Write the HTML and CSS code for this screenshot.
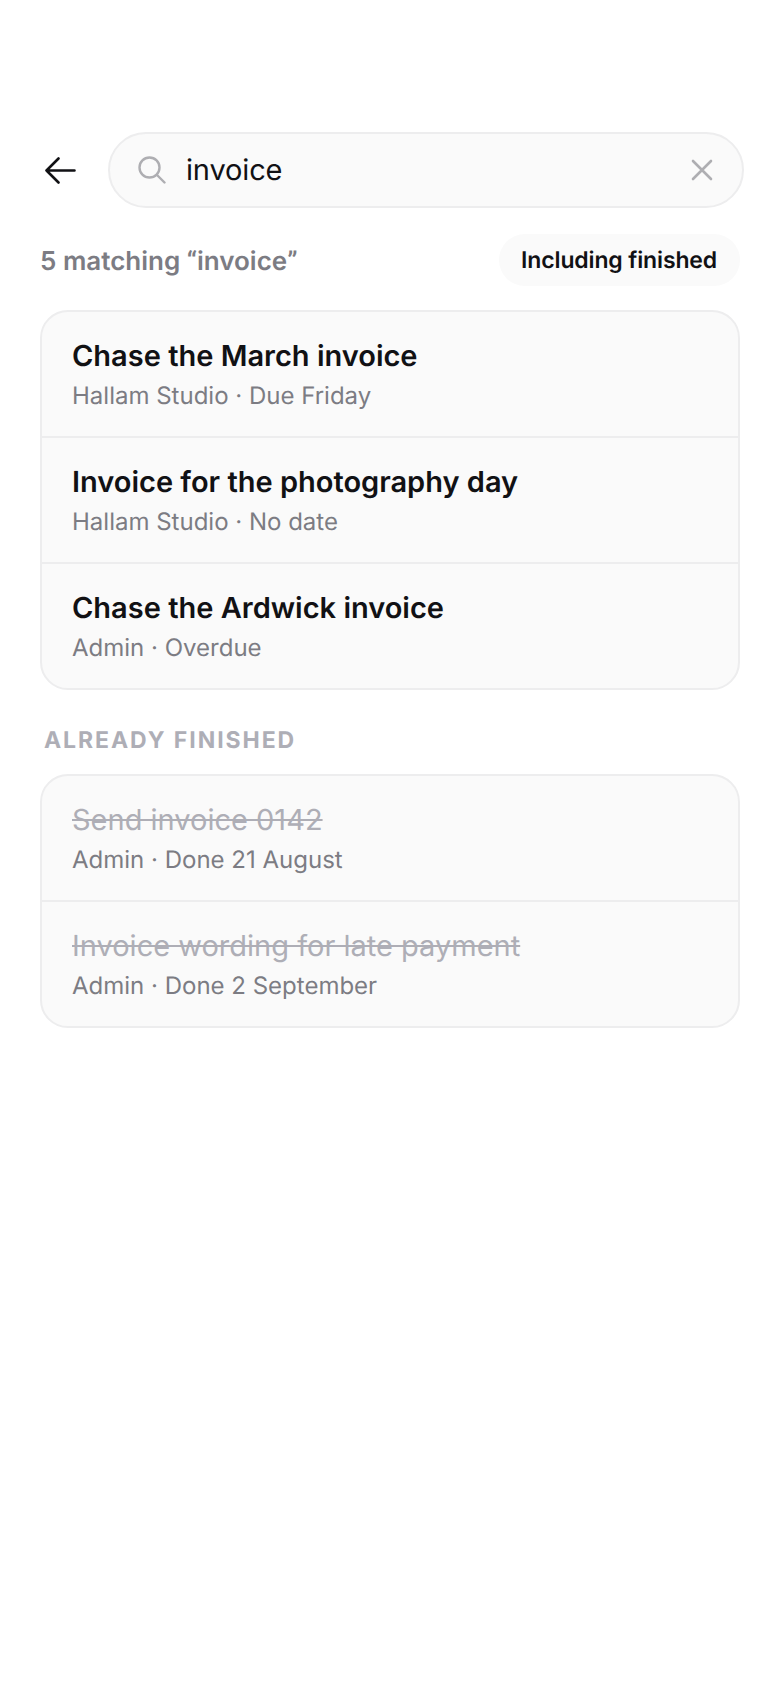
FILE: index.html
```html
<!DOCTYPE html>
<html lang="en">
<head>
<meta charset="utf-8">
<title>Search</title>
<link rel="stylesheet" href="styles.css">
</head>
<body>
<main class="screen">
  <header class="search-row">
    <button class="back" aria-label="Back">
      <svg width="31" height="27" viewBox="0 0 31 27" fill="none" stroke="#111114" stroke-width="2.6" stroke-linecap="round" stroke-linejoin="round"><path d="M29.5 13.5H1.5M13.5 1.5 1.5 13.5l12 12"/></svg>
    </button>
    <div class="search-box">
      <svg class="search-icon" width="28" height="28" viewBox="0 0 28 28" fill="none" stroke="#aeaeb2" stroke-width="2.4" stroke-linecap="round"><circle cx="11.5" cy="11.5" r="10"/><path d="m19 19 7.5 7.5"/></svg>
      <span class="query">invoice</span>
      <svg class="clear-icon" width="22" height="22" viewBox="0 0 22 22" fill="none" stroke="#aeaeb2" stroke-width="2.6" stroke-linecap="round"><path d="M2 2l18 18M20 2 2 20"/></svg>
    </div>
  </header>

  <div class="summary">
    <span class="count">5 matching <span class="quote">“</span>invoice<span class="quote">”</span></span>
    <span class="chip">Including finished</span>
  </div>

  <section class="card">
    <div class="row"><div class="title">Chase the March invoice</div><div class="sub">Hallam Studio · Due Friday</div></div>
    <div class="row"><div class="title">Invoice for the photography day</div><div class="sub">Hallam Studio · No date</div></div>
    <div class="row"><div class="title">Chase the Ardwick invoice</div><div class="sub">Admin · Overdue</div></div>
  </section>

  <h2 class="label">ALREADY FINISHED</h2>

  <section class="card">
    <div class="row"><div class="title done">Send invoice 0142</div><div class="sub">Admin · Done 21 August</div></div>
    <div class="row"><div class="title done">Invoice wording for late payment</div><div class="sub">Admin · Done 2 September</div></div>
  </section>
</main>
</body>
</html>
```
FILE: styles.css
```css
* { box-sizing: border-box; }
html, body { margin: 0; background: #fff; }
body { font-family: Inter, "Liberation Sans", sans-serif; color: #111114; text-rendering: geometricPrecision; }
.screen { width: 780px; min-height: 1688px; padding: 132px 40px 0; }
.search-row { display: flex; align-items: center; gap: 30px; margin-right: -4px; }
.back { flex: none; width: 38px; height: 36px; padding: 0 0 0 3px; border: 0; background: none; display: flex; align-items: center; justify-content: center; }
.search-box { flex: 1; height: 76px; display: flex; align-items: center; padding: 0 29px 0 28px; background: #fafafa; border: 2px solid #ededee; border-radius: 38px; }
.search-icon { flex: none; }
.query { flex: 1; margin-left: 20px; font-size: 29px; line-height: 36px; letter-spacing: -0.15px; }
.clear-icon { flex: none; }
.summary { display: flex; align-items: center; justify-content: space-between; margin-top: 26px; }
.count { padding-top: 2px; font-size: 26px; font-weight: 600; color: #7c7c83; }
.quote { font-family: Roboto, Inter, sans-serif; }
.chip { height: 52px; padding: 0 23px 0 22px; display: flex; align-items: center; background: #fafafa; border-radius: 26px; font-size: 23px; font-weight: 600; letter-spacing: -0.14px; }
.card { margin-top: 24px; background: #fafafa; border: 2px solid #ededee; border-radius: 28px; overflow: hidden; }
.row { height: 126px; padding: 26px 30px 0; border-top: 2px solid #ededee; }
.row:first-child { height: 124px; border-top: 0; }
.title { font-size: 29px; line-height: 36px; font-weight: 600; }
.title.done { font-weight: 400; color: #aeaeb6; text-decoration: line-through; }
.sub { margin-top: 4px; font-size: 24px; line-height: 36px; color: #7c7c83; }
.label { margin: 35px 0 0 4px; font-size: 23px; line-height: 30px; font-weight: 700; letter-spacing: 1.94px; color: #aeaeb6; }
.label + .card { margin-top: 19px; }
```
